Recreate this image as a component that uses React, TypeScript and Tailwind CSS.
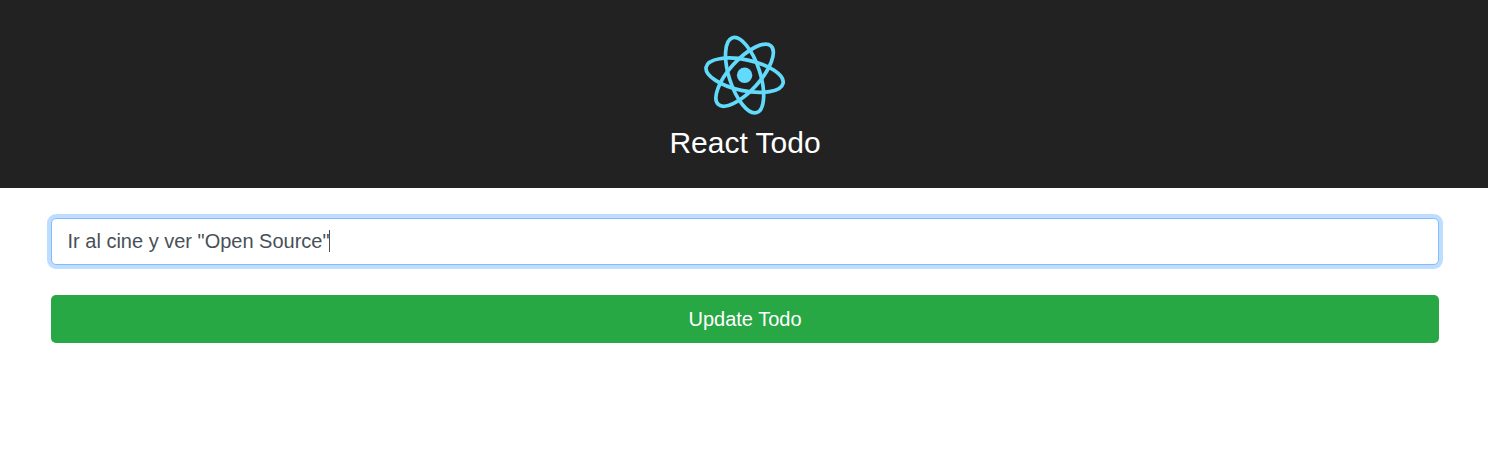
export default function App() {
  return (
    <div className="min-h-screen bg-white font-['Liberation_Sans',Arial,sans-serif]">
      <header className="flex h-[188px] flex-col items-center bg-[#222222] pt-[34px] text-white">
        <svg className="size-[82px]" viewBox="-41 -41 82 82" fill="none">
          <g stroke="#61dafb" strokeWidth="22" transform="translate(0.6 0.2) scale(0.168)">
            <ellipse rx="234" ry="92" transform="rotate(12)" />
            <ellipse rx="234" ry="92" transform="rotate(72)" />
            <ellipse rx="234" ry="92" transform="rotate(132)" />
            <circle r="45.7" fill="#61dafb" stroke="none" />
          </g>
        </svg>
        <h1 className="mt-[9px] pl-[2px] text-[30px] leading-[36px]">React Todo</h1>
      </header>
      <main className="flex flex-col gap-[30px] pt-[30px] pr-[49px] pl-[51px]">
        <div className="flex h-[47px] items-center rounded-[5px] border border-[#80bdff] bg-white pr-[15px] pb-[2px] pl-[15.5px] text-[20px] text-[#495057] shadow-[0_0_0_4px_#bfdeff]">
          <span>Ir al cine y ver "Open Source"</span>
          <span className="-ml-[0.5px] h-[22px] w-px bg-[#495057]" />
        </div>
        <button className="h-12 rounded-[5px] bg-[#28a745] text-[20px] text-white">Update Todo</button>
      </main>
    </div>
  );
}
